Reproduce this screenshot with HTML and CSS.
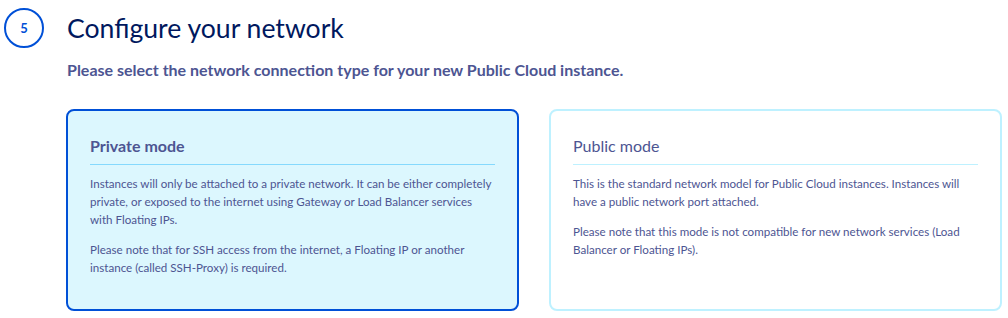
FILE: index.html
```html
<!DOCTYPE html>
<html lang="en">
<head>
<meta charset="utf-8">
<title>Configure your network</title>
<link rel="stylesheet" href="styles.css">
</head>
<body>
<section class="step">
  <header class="step-header">
    <div class="step-badge">5</div>
    <h1 class="step-title">Configure your network</h1>
  </header>
  <p class="step-lead">Please select the network connection type for your new Public Cloud instance.</p>
  <div class="options">
    <div class="option option-active">
      <h2 class="option-title option-title-bold">Private mode</h2>
      <hr class="option-divider">
      <p class="option-text">Instances will only be attached to a private network. It can be either completely private, or exposed to the internet using Gateway or Load Balancer services with Floating IPs.</p>
      <p class="option-text">Please note that for SSH access from the internet, a Floating IP or another instance (called SSH-Proxy) is required.</p>
    </div>
    <div class="option">
      <h2 class="option-title">Public mode</h2>
      <hr class="option-divider">
      <p class="option-text">This is the standard network model for Public Cloud instances. Instances will have a public network port attached.</p>
      <p class="option-text">Please note that this mode is not compatible for new network services (Load Balancer or Floating IPs).</p>
    </div>
  </div>
</section>
</body>
</html>
```
FILE: styles.css
```css
* { box-sizing: border-box; }
html, body { margin: 0; padding: 0; background: #ffffff; }
body {
  font-family: Lato, "Noto Sans", sans-serif;
  color: #4d5592;
  width: 1008px;
  height: 318px;
  overflow: hidden;
}
.step { padding: 8px 0 0 4px; }
.step-header {
  display: flex;
  align-items: center;
  gap: 23px;
  height: 40px;
}
.step-badge {
  width: 40px;
  height: 40px;
  border: 2px solid #0050d7;
  border-radius: 50%;
  display: flex;
  align-items: center;
  justify-content: center;
  color: #0050d7;
  font-weight: 700;
  font-size: 13px;
}
.step-title {
  margin: 0;
  font-weight: 400;
  font-size: 26.6px;
  line-height: 34px;
  color: #00185e;
}
.step-lead {
  margin: 12px 0 0 63px;
  font-size: 16px;
  line-height: 20px;
  font-weight: 700;
  color: #4d5592;
}
.options {
  display: flex;
  gap: 30px;
  margin: 29px 0 0 62px;
}
.option {
  width: 453px;
  height: 202px;
  border: 2px solid #bef1ff;
  border-radius: 8px;
  background: #ffffff;
  padding: 24px 22px 0 22px;
}
.option-active {
  border-color: #0050d7;
  background: #dcf7fe;
}
.option-title {
  margin: 0;
  font-size: 16px;
  line-height: 22px;
  font-weight: 400;
  color: #4d5592;
}
.option-title-bold { font-weight: 700; }
.option-divider {
  border: 0;
  border-top: 1px solid #bef1ff;
  margin: 7px 0 10px 0;
}
.option-active .option-divider { border-top-color: #85d9fd; }
.option-text {
  margin: 0 0 12px 0;
  font-size: 11.6px;
  line-height: 18px;
}
```
